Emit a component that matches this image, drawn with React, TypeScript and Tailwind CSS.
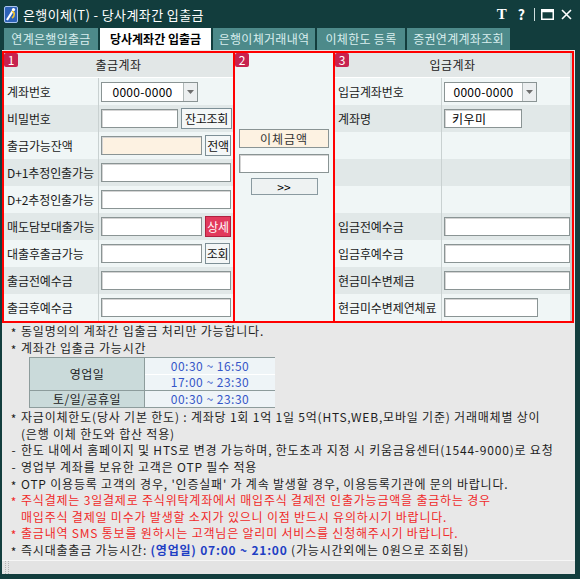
import React from 'react';

const Input = ({ w, bg = 'bg-white', children }: { w: string; bg?: string; children?: React.ReactNode }) => (
  <div className={`${w} ${bg} h-[19px] border border-[#8a9494] shadow-[inset_1px_1px_0_#d4d4d4] flex items-center pl-[7px] text-[12px] tracking-[0.5px] text-black`}>
    {children}
  </div>
);

const Select = ({ w }: { w: string }) => (
  <div className={`${w} flex h-[20px] border border-[#8a9494] bg-white`}>
    <div className="flex-1 flex items-center justify-center text-[12px] tracking-[0.3px] text-black">0000-0000</div>
    <div className="w-[14px] border-l border-[#b0b8b8] bg-[#eceff0] flex items-center justify-center">
      <svg width="7" height="4" viewBox="0 0 7 4">
        <path d="M0 0h7L3.5 4z" fill="#6e6e6e" />
      </svg>
    </div>
  </div>
);

const Btn = ({ w, red, children }: { w: string; red?: boolean; children: React.ReactNode }) => (
  <div
    className={`${w} h-[21px] ml-[3px] flex items-center justify-center text-[12px] tracking-[-0.3px] border ${
      red ? 'bg-[#e23a5c] border-[#b02040] text-white' : 'bg-[#f4f7f7] border-[#7d8f96] text-[#111]'
    }`}
  >
    {children}
  </div>
);

const Badge = ({ n }: { n: string }) => (
  <div className="absolute left-0 top-0 w-[14px] h-[14px] rounded-[2px] bg-[#c7234f] text-white text-[12px] leading-[14px] text-center">
    {n}
  </div>
);

type RowDef = { label: string; content?: React.ReactNode };

const Table = ({ title, rows, labelW }: { title: string; rows: RowDef[]; labelW: string }) => (
  <div className="flex flex-col">
    <div className="h-[25px] bg-[#e2e7e7] border-b border-white flex items-center justify-center text-[12px] tracking-[0.5px] text-[#222]">
      {title}
    </div>
    {rows.map((r, i) => (
      <div key={i} className={`h-[27px] flex ${i % 2 === 0 ? 'bg-[#f0f6f6]' : 'bg-[#e1e8e8]'}`}>
        <div className={`${labelW} shrink-0 border-r border-[#c9d1d1] flex items-center pl-[3px] text-[12px] tracking-[-0.1px] text-[#1a1a1a] whitespace-nowrap`}>
          {r.label}
        </div>
        <div className="flex-1 flex items-center pl-[2px]">{r.content}</div>
      </div>
    ))}
  </div>
);

const Note = ({ bullet = '*', color = 'text-[#1e1e1e]', children }: { bullet?: string; color?: string; children: React.ReactNode }) => (
  <div className={`flex whitespace-nowrap ${color}`}>
    <span className={`w-[14px] shrink-0 text-center relative ${bullet === '*' ? 'top-[2px]' : 'top-0'}`}>{bullet}</span>
    <span>{children}</span>
  </div>
);

export default function App() {
  const outRows: RowDef[] = [
    { label: '계좌번호', content: <Select w="w-[97px]" /> },
    { label: '비밀번호', content: <><Input w="w-[77px]" /><Btn w="w-[51px]">잔고조회</Btn></> },
    { label: '출금가능잔액', content: <><Input w="w-[101px]" bg="bg-[#fdf2e2]" /><Btn w="w-[26px]">전액</Btn></> },
    { label: 'D+1추정인출가능', content: <Input w="w-[130px]" /> },
    { label: 'D+2추정인출가능', content: <Input w="w-[130px]" /> },
    { label: '매도담보대출가능', content: <><Input w="w-[101px]" /><Btn w="w-[26px]" red>상세</Btn></> },
    { label: '대출후출금가능', content: <><Input w="w-[101px]" /><Btn w="w-[25px]">조회</Btn></> },
    { label: '출금전예수금', content: <Input w="w-[130px]" /> },
    { label: '출금후예수금', content: <Input w="w-[130px]" /> },
  ];

  const inRows: RowDef[] = [
    { label: '입금계좌번호', content: <Select w="w-[93px]" /> },
    { label: '계좌명', content: <Input w="w-[78px]">키우미</Input> },
    { label: '' },
    { label: '' },
    { label: '' },
    { label: '입금전예수금', content: <Input w="w-[126px]" /> },
    { label: '입금후예수금', content: <Input w="w-[126px]" /> },
    { label: '현금미수변제금', content: <Input w="w-[126px]" /> },
    { label: '현금미수변제연체료', content: <Input w="w-[94px]" /> },
  ];

  return (
    <div className="w-[580px] h-[579px] bg-[#123d3d] flex flex-col font-['Noto_Sans_CJK_KR','Noto_Sans',sans-serif] overflow-hidden">
      {/* title bar */}
      <div className="h-[28px] flex items-center justify-between pl-[4px] pr-[8px]">
        <div className="flex items-center gap-[5px]">
          <svg width="14" height="17" viewBox="0 0 14 17">
            <rect x="0.5" y="0.5" width="13" height="16" rx="1.5" fill="#2d62b8" stroke="#a9c4ee" />
            <path d="M3 14L10 3" stroke="#fff" strokeWidth="2.2" />
            <path d="M8 5c3 1 3 5 0 7" stroke="#f2c230" strokeWidth="1.6" fill="none" />
            <circle cx="9.5" cy="3.5" r="1.6" fill="#fff" />
          </svg>
          <span className="text-white text-[13px] leading-none tracking-[0.4px]">은행이체(T) - 당사계좌간 입출금</span>
        </div>
        <div className="flex items-center text-white">
          <span className="font-['Liberation_Serif',serif] font-bold text-[15px] leading-none">T</span>
          <span className="ml-[11px] font-bold text-[14px] leading-none">?</span>
          <span className="ml-[9px] w-[1px] h-[13px] bg-[#cfdede]" />
          <svg className="ml-[6px]" width="13" height="11" viewBox="0 0 13 11">
            <rect x="0.75" y="0.75" width="11.5" height="9.5" fill="none" stroke="#fff" strokeWidth="1.5" />
            <rect x="0.75" y="0.75" width="11.5" height="2.5" fill="#fff" />
          </svg>
          <svg className="ml-[7px]" width="11" height="11" viewBox="0 0 11 11">
            <path d="M1 1l9 9M10 1l-9 9" stroke="#fff" strokeWidth="1.6" />
          </svg>
        </div>
      </div>

      {/* tabs */}
      <div className="h-[22px] flex items-stretch gap-[2px] pl-[4px] text-[12px] tracking-[0.3px]">
        <div className="w-[94px] bg-[#4d8a8a] text-[#d9eeee] flex items-center justify-center">연계은행입출금</div>
        <div className="w-[111px] bg-white text-black font-bold flex items-center justify-center tracking-[0px]">당사계좌간 입출금</div>
        <div className="w-[102px] bg-[#4d8a8a] text-[#d9eeee] flex items-center justify-center">은행이체거래내역</div>
        <div className="w-[88px] bg-[#4d8a8a] text-[#d9eeee] flex items-center justify-center">이체한도 등록</div>
        <div className="w-[103px] bg-[#4d8a8a] text-[#d9eeee] flex items-center justify-center">증권연계계좌조회</div>
      </div>

      {/* content */}
      <div className="flex-1 ml-[2px] mr-[5px] mb-[5px] bg-[#e8e8e8] flex flex-col">
        <div className="flex pt-[1px]">
          <div className="relative w-[233px] border-2 border-[#ff0000]">
            <Table title="출금계좌" rows={outRows} labelW="w-[95px]" />
            <Badge n="1" />
          </div>
          <div className="relative w-[100px] border-2 border-l-0 border-[#ff0000] bg-[#f0f6f6] flex flex-col items-center pt-[76px]">
            <div className="w-[90px] h-[19px] border border-[#8a9494] bg-[#fdf2e2] flex items-center justify-center text-[12px] text-[#333] tracking-[1px]">
              이체금액
            </div>
            <div className="mt-[6px] w-[90px] h-[19px] border border-[#8a9494] bg-white shadow-[inset_1px_1px_0_#d4d4d4]" />
            <div className="mt-[5px] w-[67px] h-[17px] border border-[#8a9aa0] bg-[#eef2f2] flex items-center justify-center text-[12px] leading-none text-black">
              &gt;&gt;
            </div>
            <Badge n="2" />
          </div>
          <div className="relative w-[239px] border-2 border-l-0 border-[#ff0000]">
            <div className="border-r-[2px] border-[#c4cccc]">
              <Table title="입금계좌" rows={inRows} labelW="w-[107px]" />
            </div>
            <Badge n="3" />
          </div>
        </div>

        {/* notes */}
        <div className="pl-[5px] text-[12px] leading-[16.6px] tracking-[0.8px]">
          <Note>동일명의의 계좌간 입출금 처리만 가능합니다.</Note>
          <Note>계좌간 입출금 가능시간</Note>
          <div className="ml-[22px] my-[1px] w-[246px] grid grid-cols-[114px_130px] grid-rows-[17px_16px_16px] border border-[#8d9c9c] bg-[#8d9c9c] gap-x-[1px] tracking-[0.5px]">
            <div className="row-span-2 bg-[#cadada] flex items-center justify-center text-[#222] border-b border-[#8d9c9c]">영업일</div>
            <div className="bg-[#eef4f7] border-b border-white flex items-center justify-center text-[#3556c8]">00:30 ~ 16:50</div>
            <div className="bg-[#eef4f7] border-b border-[#8d9c9c] flex items-center justify-center text-[#3556c8]">17:00 ~ 23:30</div>
            <div className="bg-[#cadada] flex items-center justify-center text-[#222]">토/일/공휴일</div>
            <div className="bg-[#eef4f7] flex items-center justify-center text-[#3556c8]">00:30 ~ 23:30</div>
          </div>
          <Note>자금이체한도(당사 기본 한도) : 계좌당 1회 1억 1일 5억(HTS,WEB,모바일 기준) 거래매체별 상이</Note>
          <Note bullet="">(은행 이체 한도와 합산 적용)</Note>
          <Note bullet="-">한도 내에서 홈페이지 및 HTS로 변경 가능하며, 한도초과 지정 시 키움금융센터(1544-9000)로 요청</Note>
          <Note bullet="-">영업부 계좌를 보유한 고객은 OTP 필수 적용</Note>
          <Note>OTP 이용등록 고객의 경우, '인증실패' 가 계속 발생할 경우, 이용등록기관에 문의 바랍니다.</Note>
          <Note color="text-[#f02a2a]">주식결제는 3일결제로 주식위탁계좌에서 매입주식 결제전 인출가능금액을 출금하는 경우</Note>
          <Note bullet="" color="text-[#f02a2a]">매입주식 결제일 미수가 발생할 소지가 있으니 이점 반드시 유의하시기 바랍니다.</Note>
          <Note color="text-[#f02a2a]">출금내역 SMS 통보를 원하시는 고객님은 알리미 서비스를 신청해주시기 바랍니다.</Note>
          <Note>
            즉시대출출금 가능시간: <span className="font-bold text-[#1f3fc4]">(영업일) 07:00 ~ 21:00</span> (가능시간외에는 0원으로 조회됨)
          </Note>
        </div>

        {/* status bar */}
        <div className="flex-1 mt-[1px] border-t border-[#f6f6f6] bg-[#e3e3e3] flex items-center pl-[3px]">
          <svg width="5" height="13" viewBox="0 0 5 13">
            <path d="M0.5 0v13M3.5 0v13" stroke="#b5b5b5" strokeDasharray="1 1" />
          </svg>
        </div>
      </div>
    </div>
  );
}
